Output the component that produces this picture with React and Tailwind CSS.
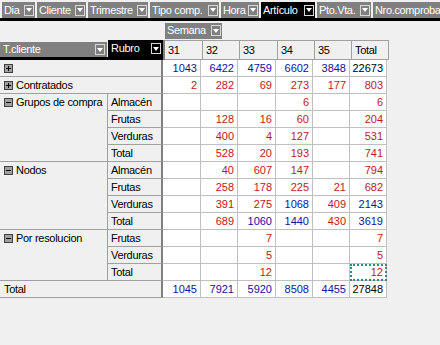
import React from "react";

function Arrow() {
  return (
    <span className="flex h-[11px] w-[10px] shrink-0 items-center justify-center border border-[#d8d8d8]">
      <svg width="6" height="4" viewBox="0 0 6 4">
        <path d="M0 0h6L3 4z" fill="white" />
      </svg>
    </span>
  );
}

function FieldBtn({ label, w, dark }) {
  return (
    <div
      className={`flex h-[16px] shrink-0 items-center gap-[1px] pl-[2px] pr-[1px] text-white ${
        dark ? "bg-black" : "bg-[#808080]"
      }`}
      style={{ width: w }}
    >
      <span className="flex-1 overflow-hidden whitespace-nowrap leading-none tracking-[-0.35px]">{label}</span>
      <Arrow />
    </div>
  );
}

function Expander({ minus }) {
  return (
    <svg width="9" height="9" viewBox="0 0 9 9" className="shrink-0">
      <rect x="0" y="0" width="9" height="9" fill="#404040" />
      <rect x="1" y="1" width="7" height="7" fill="#a0a0a0" />
      <rect x="2" y="4" width="5" height="1" fill="black" />
      {!minus && <rect x="4" y="2" width="1" height="5" fill="black" />}
    </svg>
  );
}

const rows = [
  { h: { label: "", exp: true }, d: ["1043", "6422", "4759", "6602", "3848", "22673"], totalBlack: true },
  { h: { label: "Contratados", exp: true }, d: ["2", "282", "69", "273", "177", "803"] },
  { g: { label: "Grupos de compra", span: 4 }, s: "Almacén", d: ["", "", "", "6", "", "6"] },
  { s: "Frutas", d: ["", "128", "16", "60", "", "204"] },
  { s: "Verduras", d: ["", "400", "4", "127", "", "531"] },
  { s: "Total", d: ["", "528", "20", "193", "", "741"] },
  { g: { label: "Nodos", span: 4 }, s: "Almacén", d: ["", "40", "607", "147", "", "794"] },
  { s: "Frutas", d: ["", "258", "178", "225", "21", "682"] },
  { s: "Verduras", d: ["", "391", "275", "1068", "409", "2143"] },
  { s: "Total", d: ["", "689", "1060", "1440", "430", "3619"] },
  { g: { label: "Por resolucion", span: 3 }, s: "Frutas", d: ["", "", "7", "", "", "7"] },
  { s: "Verduras", d: ["", "", "5", "", "", "5"] },
  { s: "Total", d: ["", "", "12", "", "", "12"], focus: true },
  { h: { label: "Total" }, d: ["1045", "7921", "5920", "8508", "4455", "27848"], totalBlack: true },
];

export default function App() {
  const cells = [];
  rows.forEach((r, ri) => {
    if (r.h) {
      cells.push(
        <div
          key={`h${ri}`}
          className="col-span-2 flex h-[17px] items-center gap-[3px] border-b border-r-2 border-b-[#a0a0a0] border-r-[#808080] bg-[#f0f0f0] pl-[4px] tracking-[-0.3px]"
        >
          {r.h.exp && <Expander />}
          <span>{r.h.label}</span>
        </div>
      );
    } else {
      if (r.g) {
        cells.push(
          <div
            key={`g${ri}`}
            className={`flex items-start gap-[3px] border-b border-r border-[#a0a0a0] bg-[#f0f0f0] pl-[4px] pt-[4px] tracking-[-0.3px] ${
              r.g.span === 4 ? "row-span-4" : "row-span-3"
            }`}
          >
            <Expander minus />
            <span className="-mt-[3px] whitespace-nowrap leading-[15px]">{r.g.label}</span>
          </div>
        );
      }
      cells.push(
        <div
          key={`s${ri}`}
          className="flex h-[17px] items-center border-b border-r-2 border-b-[#a0a0a0] border-r-[#808080] bg-[#f0f0f0] pl-[3px] tracking-[-0.3px]"
        >
          {r.s}
        </div>
      );
    }
    r.d.forEach((v, ci) => {
      const n = v === "" ? 0 : parseInt(v, 10);
      let color = n >= 1000 ? "text-[#1010a0]" : "text-[#c01818]";
      if (ci === 5 && r.totalBlack) color = "text-black";
      const focus = r.focus && ci === 5;
      cells.push(
        <div
          key={`d${ri}-${ci}`}
          className={`flex h-[17px] items-center justify-end border-b border-r border-[#c0c0c0] bg-white pr-[3px] ${color} ${
            focus ? "outline-2 -outline-offset-2 outline-dotted outline-[#2a8a8a]" : ""
          }`}
        >
          {v}
        </div>
      );
    });
  });

  const colHeads = ["31", "32", "33", "34", "35", "Total"];

  return (
    <div
      className="h-[345px] w-[440px] overflow-hidden bg-[#f0f0f0] text-[11px] text-black"
      style={{ fontFamily: '"Liberation Sans", Arial, sans-serif' }}
    >
      {/* page fields bar */}
      <div className="flex gap-[2px] border-b-[3px] border-black pl-[2px] pt-[2px]">
        <FieldBtn label="Dia" w={33} />
        <FieldBtn label="Cliente" w={49} />
        <FieldBtn label="Trimestre" w={60} />
        <FieldBtn label="Tipo comp." w={69} />
        <FieldBtn label="Hora" w={38} />
        <FieldBtn label="Artículo" w={54} dark />
        <FieldBtn label="Pto.Vta." w={54} />
        <div className="flex h-[16px] min-w-0 flex-1 items-center overflow-hidden bg-[#808080] pl-[2px] text-white">
          <span className="whitespace-nowrap leading-none tracking-[-0.35px]">Nro.comproba</span>
        </div>
      </div>

      {/* column field area */}
      <div className="flex h-[19px] items-center pl-[165px]">
        <FieldBtn label="Semana" w={57} />
      </div>

      {/* header row */}
      <div className="flex h-[20px]">
        <div className="flex w-[163px] items-end border-b-[3px] border-black">
          <div className="flex h-[15px] w-[107px] items-center justify-between bg-[#808080] pl-[3px] pr-[2px] text-white">
            <span className="leading-none tracking-[-0.3px]">T.cliente</span>
            <Arrow />
          </div>
          <div className="ml-[1px] flex h-[17px] w-[55px] items-center justify-between bg-black pl-[3px] pr-[2px] text-white">
            <span className="leading-none tracking-[-0.3px]">Rubro</span>
            <Arrow />
          </div>
        </div>
        <div className="grid grid-cols-[38px_37px_38px_37px_37px_37px] border-l-2 border-l-[#808080]">
          {colHeads.map((c) => (
            <div
              key={c}
              className="flex items-center border-b border-r border-t border-[#a0a0a0] bg-[#f0f0f0] pl-[3px] tracking-[-0.3px]"
            >
              {c}
            </div>
          ))}
        </div>
      </div>

      {/* body */}
      <div className="grid w-max grid-cols-[108px_55px_38px_37px_38px_37px_37px_37px]">{cells}</div>
    </div>
  );
}
